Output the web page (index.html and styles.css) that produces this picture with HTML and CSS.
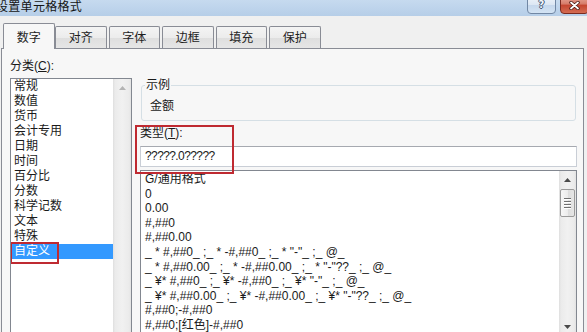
FILE: index.html
```html
<!DOCTYPE html>
<html lang="zh-CN">
<head>
<meta charset="utf-8">
<title>设置单元格格式</title>
<link rel="stylesheet" href="styles.css">
</head>
<body>
<div class="window">
  <header class="titlebar">
    <span class="title">设置单元格格式</span>
    <div class="caption-buttons">
      <div class="cap-btn help"><span class="help-glyph">?</span></div>
      <div class="cap-btn close">
        <svg width="11" height="9" viewBox="0 0 11 9">
          <path d="M2 1.5 L9 7.5 M9 1.5 L2 7.5" stroke="#4a1a12" stroke-width="3.4" stroke-linecap="round"/>
          <path d="M2 1.5 L9 7.5 M9 1.5 L2 7.5" stroke="#ffffff" stroke-width="1.8" stroke-linecap="round"/>
        </svg>
      </div>
    </div>
  </header>
  <div class="dialog">
    <nav class="tabs">
      <div class="tab active">数字</div>
      <div class="tab">对齐</div>
      <div class="tab">字体</div>
      <div class="tab">边框</div>
      <div class="tab">填充</div>
      <div class="tab">保护</div>
    </nav>
    <section class="panel">
      <div class="col-left">
        <div class="label">分类(<u>C</u>):</div>
        <div class="listbox cat-list">
          <ul class="items">
            <li>常规</li>
            <li>数值</li>
            <li>货币</li>
            <li>会计专用</li>
            <li>日期</li>
            <li>时间</li>
            <li>百分比</li>
            <li>分数</li>
            <li>科学记数</li>
            <li>文本</li>
            <li>特殊</li>
            <li class="selected"><span class="mark">自定义</span></li>
          </ul>
          <div class="scrollbar wide disabled">
            <div class="sb-btn">
              <svg width="7" height="4" viewBox="0 0 7 4"><path d="M0 4 L3.5 0 L7 4 Z" fill="#b4b4b4"/></svg>
            </div>
            <div class="sb-track"></div>
          </div>
        </div>
      </div>
      <div class="col-right">
        <fieldset class="sample">
          <legend>示例</legend>
          <div class="sample-value">金额</div>
        </fieldset>
        <div class="type-block">
          <div class="label">类型(<u>T</u>):</div>
          <div class="textbox">?????.0?????</div>
        </div>
        <div class="listbox fmt-list">
          <ul class="items">
            <li>G/通用格式</li>
            <li>0</li>
            <li>0.00</li>
            <li>#,##0</li>
            <li>#,##0.00</li>
            <li>_ * #,##0_ ;_ * -#,##0_ ;_ * "-"_ ;_ @_</li>
            <li>_ * #,##0.00_ ;_ * -#,##0.00_ ;_ * "-"??_ ;_ @_</li>
            <li>_ ¥* #,##0_ ;_ ¥* -#,##0_ ;_ ¥* "-"_ ;_ @_</li>
            <li>_ ¥* #,##0.00_ ;_ ¥* -#,##0.00_ ;_ ¥* "-"??_ ;_ @_</li>
            <li>#,##0;-#,##0</li>
            <li>#,##0;[红色]-#,##0</li>
          </ul>
          <div class="scrollbar">
            <div class="sb-btn">
              <svg width="7" height="4" viewBox="0 0 7 4"><path d="M0 4 L3.5 0 L7 4 Z" fill="#4a4a4a"/></svg>
            </div>
            <div class="thumb">
              <span class="grip"></span><span class="grip"></span><span class="grip"></span><span class="grip"></span>
            </div>
            <div class="sb-track"></div>
            <div class="sb-btn">
              <svg width="7" height="4" viewBox="0 0 7 4"><path d="M0 0 L3.5 4 L7 0 Z" fill="#4a4a4a"/></svg>
            </div>
          </div>
        </div>
      </div>
    </section>
  </div>
</div>
</body>
</html>
```

FILE: styles.css
```css
* { box-sizing: border-box; }
html, body { margin: 0; padding: 0; }
body {
  width: 587px;
  height: 332px;
  overflow: hidden;
  background: #f0f0f0;
  font-family: "Liberation Sans", "Noto Sans CJK SC", sans-serif;
  font-size: 12px;
  color: #1a1a1a;
}
.window {
  width: 587px;
  height: 332px;
  overflow: hidden;
  display: flex;
  flex-direction: column;
}

/* title bar */
.titlebar {
  flex: 0 0 16px;
  display: flex;
  justify-content: space-between;
  align-items: flex-start;
  background: linear-gradient(#c6daef, #b6cee8);
  overflow: hidden;
}
.title {
  margin-left: -4px;
  line-height: 15px;
  letter-spacing: 0.3px;
  color: #141414;
  white-space: nowrap;
}
.caption-buttons {
  display: flex;
  gap: 4px;
  margin-top: -4px;
  margin-right: -2px;
}
.cap-btn {
  width: 29px;
  height: 18px;
  border-radius: 0 0 4px 4px;
  display: flex;
  align-items: center;
  justify-content: center;
}
.help {
  border: 1px solid #7187a4;
  background: linear-gradient(#eef3fa, #dbe6f3 50%, #c5d7ec 51%, #d3e3f4);
}
.help-glyph {
  font-family: "DejaVu Sans", sans-serif;
  font-weight: bold;
  font-size: 10px;
  line-height: 10px;
  color: #f4f7fb;
  text-shadow: 1px 0 #3d5372, -1px 0 #3d5372, 0 1px #3d5372, 0 -1px #3d5372;
}
.close {
  border: 1px solid #7a2a20;
  background: linear-gradient(#e8a697, #d57a68 45%, #c4442f 50%, #d46c52);
}

/* dialog body */
.dialog {
  flex: 1;
  padding-top: 7px;
  display: flex;
  flex-direction: column;
  min-height: 0;
}
.tabs {
  display: flex;
  align-items: flex-end;
  height: 25px;
  padding-left: 3px;
  position: relative;
  z-index: 1;
}
.tab {
  width: 51.5px;
  height: 22px;
  margin-left: 2px;
  border: 1px solid #898c95;
  border-bottom: none;
  border-radius: 2px 2px 0 0;
  background: linear-gradient(#f4f4f4, #ececec 50%, #dedede 51%, #e6e6e6);
  text-align: center;
  line-height: 20px;
  padding-top: 1px;
  color: #1e1e1e;
}
.tab.active {
  height: 26px;
  margin-left: 0;
  margin-bottom: -1px;
  padding-top: 4px;
  background: #f7f7f7;
}
.tab.active + .tab { margin-left: 0.5px; }

.panel {
  flex: 1;
  margin-left: 1px;
  width: 583px;
  border: 1px solid #898c95;
  border-bottom: none;
  background: #f7f7f7;
  padding: 10px 6px 0 8px;
  display: flex;
  gap: 8px;
  min-height: 0;
}
.label {
  line-height: 15px;
  height: 15px;
  white-space: nowrap;
}

/* list boxes */
.listbox {
  border: 1px solid #828790;
  background: #ffffff;
  display: flex;
  flex: none;
}
.items {
  list-style: none;
  margin: 0;
  padding: 0;
  flex: 1;
  min-width: 0;
  overflow: hidden;
}
.items li { white-space: nowrap; }

.col-left {
  width: 122px;
  flex: none;
  display: flex;
  flex-direction: column;
}
.cat-list {
  margin-top: 4px;
  height: 270px;
}
.cat-list .items li {
  height: 15px;
  line-height: 15px;
  padding-left: 3px;
}
.cat-list li.selected {
  background: #3399ff;
  color: #ffffff;
}
.mark {
  position: relative;
  display: inline-block;
  height: 15px;
}
.mark::after {
  content: "";
  position: absolute;
  left: -4px;
  top: -2px;
  width: 45px;
  height: 18px;
  border: 2px solid #bf2a31;
  pointer-events: none;
}

/* scrollbars */
.scrollbar {
  width: 17px;
  flex: none;
  display: flex;
  flex-direction: column;
  background: linear-gradient(90deg, #dedede 0, #ebebeb 2px, #f1f1f1 50%, #ebebeb calc(100% - 2px), #e2e2e2 100%);
}
.scrollbar.wide { width: 18px; }
.sb-btn {
  height: 17px;
  flex: none;
  display: flex;
  align-items: center;
  justify-content: center;
}
.sb-track { flex: 1; }
.thumb {
  height: 28px;
  flex: none;
  margin: 1px 1px 0;
  border: 1px solid #9a9a9a;
  border-radius: 2px;
  background: linear-gradient(90deg, #f7f7f7, #ececec 50%, #dcdcdc 51%, #e6e6e6);
  display: flex;
  flex-direction: column;
  align-items: center;
  justify-content: center;
  gap: 2px;
}
.grip {
  width: 7px;
  height: 1px;
  background: #707070;
  box-shadow: 0 1px #ffffff;
}

/* right column */
.col-right {
  width: 437px;
  flex: none;
  padding-top: 19px;
  display: flex;
  flex-direction: column;
}
.sample {
  margin: 0 1px;
  padding: 6px 8px;
  border: 1px solid #d5dfe5;
  border-radius: 3px;
  min-width: 0;
}
.sample legend {
  padding: 0 1px;
  margin-left: -5px;
  line-height: 15px;
}
.sample-value { line-height: 15px; }

.type-block {
  margin-top: 5px;
  position: relative;
}
.type-block::after {
  content: "";
  position: absolute;
  left: -5px;
  top: -1px;
  width: 95px;
  height: 45px;
  border: 2px solid #bf2a31;
  pointer-events: none;
}
.textbox {
  margin-top: 5px;
  height: 21px;
  border: 1px solid #c9ced6;
  border-top-color: #a6a9b0;
  background: #ffffff;
  padding-left: 4px;
  line-height: 19px;
  letter-spacing: -0.6px;
  white-space: nowrap;
}
.fmt-list {
  margin-top: 3px;
  height: 166px;
}
.fmt-list .items { padding: 1px 0 0 4px; }
.fmt-list .items li {
  height: 14.6px;
  line-height: 14.6px;
}
```
